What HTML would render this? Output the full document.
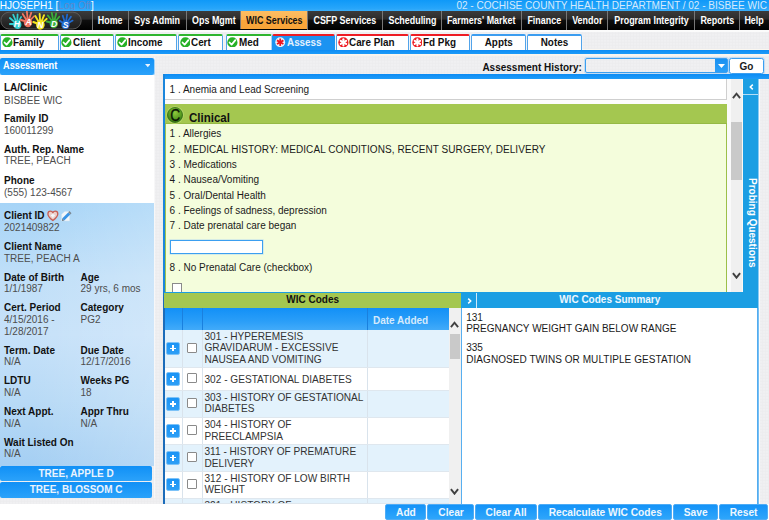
<!DOCTYPE html>
<html lang="en">
<head>
<meta charset="utf-8">
<title>HANDS - Assessment</title>
<style>
html,body{margin:0;padding:0;}
body{width:769px;height:520px;overflow:hidden;background:#fff;position:relative;
 font-family:"Liberation Sans",Arial,sans-serif;font-size:10px;color:#222;}
*{box-sizing:border-box;}
.a{position:absolute;}
.t{position:absolute;white-space:nowrap;line-height:12px;font-size:10px;margin-top:0.6px;}
.b{font-weight:bold;color:#111;}
.v{color:#4d4d4d;}
/* background */
#bg{left:0;top:30px;width:769px;height:473.7px;background-color:#ececee;
 background-image:radial-gradient(circle,#f6f6f8 0.6px,rgba(246,246,248,0) 1.1px);background-size:3px 3px;background-position:0.5px 0.4px;}
/* top bar */
#top{left:0;top:0;width:769px;height:11px;background:linear-gradient(#0f99f8,#26a5fa 75%,#3aaef9);overflow:hidden;}
#top .t{font-size:10.05px;color:#fff;line-height:12px;top:0;margin-top:0;}
/* nav */
#nav{left:0;top:11px;width:769px;height:19px;background:linear-gradient(#3b3b3b 0,#2c2c2c 42%,#0e0e0e 50%,#000 100%);}
#nav .i{position:absolute;top:0;height:19px;border-left:1px solid #777;color:#fff;font-weight:bold;font-size:10.2px;
 line-height:19px;text-align:center;white-space:nowrap;}
#nav .i span{display:inline-block;transform:scaleX(.875);}
#nav .sel{height:17.9px;background:linear-gradient(#fdbd62 0,#fbb352 48%,#f9a63c 52%,#f8a438 100%);color:#111;}
/* tab row */
#tabrow{left:0;top:30px;width:769px;height:20px;border-top:2px solid #fbfbfb;}
.tab{position:absolute;top:1.8px;height:16.2px;background:#fff;border:1px solid #52a4ea;box-shadow:0 0 0 0.6px #f4f6fa;border-bottom:0;border-top:2px solid #2fb52f;
 border-radius:2px 2px 0 0;font-weight:bold;font-size:10.4px;line-height:13px;color:#111;white-space:nowrap;}
.tab.red{border-top-color:#ee1c24;}
.tab.blue{border-top-color:#3c9df0;}
.tab.cur{height:16.4px;background:#1c93f1;color:#e4f1fd;border-color:#1c93f1;border-top-color:#ee1c24;}
.tab svg{position:absolute;left:0.6px;top:0.8px;}
.tab span{position:absolute;top:0.3px;transform:scaleX(.95);transform-origin:0 50%;}
#band{left:0;top:50px;width:769px;height:6px;background:linear-gradient(#0d8cf4 0,#1e9cf9 4.2px,#fbf6ee 4.3px,#f6f3ee 6px);}

/* left panel */
#lh{left:0;top:57.7px;width:153.8px;height:17px;border-radius:2px;background:linear-gradient(#1090f6,#2ba2fa);box-shadow:0.5px 0.5px 0 0.3px #8ccbfa;
 color:#fff;font-weight:bold;font-size:10px;line-height:16px;padding-left:3.3px;}
#lw{left:0;top:74.5px;width:153.8px;height:128.5px;background:#fff;}
#lb{left:0;top:203px;width:153.8px;height:262.5px;background:linear-gradient(90deg,rgba(255,255,255,0) 20%,rgba(255,255,255,.2)),linear-gradient(#a6d4f7 0,#c0dff8 28%,#c6e1f9 50%,#b8daf6 75%,#a5cff3 100%);}
.pbtn{position:absolute;left:0;width:152.2px;height:15.6px;border-radius:2px;background:linear-gradient(#1090f6,#2ba2fa);
 color:#eaf4fe;font-weight:bold;font-size:10px;line-height:15.5px;text-align:center;}

/* assessment history */
#ahl{left:482.4px;top:61px;font-weight:bold;font-size:10px;color:#111;}
#ahs{left:585px;top:58px;width:143px;height:15.2px;border:1px solid #3b9ff0;border-radius:2px;box-shadow:0 0 0 1px rgba(160,205,245,.55);}
#ahs i{position:absolute;right:0;top:0;width:12.5px;height:13.2px;background:linear-gradient(#1a91f1,#2a9ff7);}
#go{left:729.3px;top:58px;width:34.4px;height:16.4px;border:1px solid #3b9ff0;border-radius:2.5px;background:#fff;box-shadow:0 0 0 1px rgba(160,205,245,.55);
 font-weight:bold;font-size:10px;line-height:15px;text-align:center;color:#1a1a1a;}
/* main panel */
#mline{left:163.2px;top:74.3px;width:606px;height:4.6px;background:linear-gradient(#0d8cf4,#1e9cf9);}
#mleft{left:163.2px;top:74.3px;width:1.8px;height:429.4px;background:linear-gradient(#1b86dc 0,#1b86dc 50%,#1c6cba 52%);}
#q1{left:165px;top:78.9px;width:566px;height:25.1px;background:#fcfcfc;}
#q1 div{position:absolute;left:0;top:0;width:562.4px;height:21.6px;background:#fff;border-right:1px solid #cfcfcf;border-bottom:1px solid #cfcfcf;}
#gh{left:164px;top:104px;width:563px;height:20.4px;background:#a4c750;border-bottom:1.2px solid #95b945;}
#gb{left:164px;top:123.8px;width:563px;height:168px;background:#f4fddc;border-left:2.2px solid #a0c44e;border-right:1.2px solid #9cc04a;}
#sb1{left:727px;top:78.9px;width:16px;height:213px;background:linear-gradient(90deg,#fafafa 0,#fafafa 3.8px,#f0f0f0 4px,#f0f0f0 15px,#fbf9f5 15.1px);}
.thumb{position:absolute;background:#c9c9c9;}
#pq{left:743px;top:78.9px;width:15.2px;height:213.5px;background:#1b9ee3;}
#pqb{left:743px;top:78.9px;width:15.2px;height:16px;background:#1c9fe3;border-bottom:1.2px solid #b4ddf6;}
#pqt{left:752.4px;top:177.5px;width:0;height:0;}
#pqt span{position:absolute;left:0;top:0;transform-origin:0 0;transform:rotate(90deg) translate(0,-50%);white-space:nowrap;color:#fff;font-weight:bold;font-size:10px;line-height:12px;}
#rline{left:758.2px;top:78.9px;width:2px;height:424.8px;background:linear-gradient(90deg,#8ccaf3 0,#8ccaf3 0.9px,#fbfbfb 1px);}
.q{color:#1a1a1a;}

/* WIC codes */
#wl{left:164px;top:291.6px;width:594.2px;height:1.6px;background:#1b9ee3;}
#wh{left:164px;top:293px;width:297.3px;height:15px;background:#a4c750;text-align:center;font-weight:bold;font-size:10px;line-height:13px;color:#111;}
#sh{left:461.3px;top:292px;width:296.9px;height:16px;background:#1b9ee3;color:#eef7fe;font-weight:bold;font-size:10px;line-height:14px;}
#gHead{left:165px;top:308px;width:283.5px;height:21.5px;background:linear-gradient(#1290f7,#2a9ef8 60%,#42abf9);}
#gHead i{position:absolute;top:0;width:1px;height:21.5px;background:#1a80de;}
.row{position:absolute;left:165px;width:283.5px;border-bottom:1px solid #dfe7ee;overflow:hidden;}
.row.alt{background:#e3f2fc;}
.row.w{background:#fff;}
.row i{position:absolute;top:0;bottom:0;width:1px;background:#d9e3ec;}
.row .tx{position:absolute;left:39.5px;margin-top:0.6px;font-size:10.1px;line-height:11.75px;color:#333;white-space:nowrap;}
.plus{position:absolute;left:1px;width:13.6px;height:13.8px;border-radius:2px;background:linear-gradient(#1a93f5,#2e9ff6);border:1px solid #7cc2f8;}
.plus:before{content:"";position:absolute;left:2.8px;top:5.1px;width:6px;height:1.6px;background:#fff;}
.plus:after{content:"";position:absolute;left:5px;top:2.9px;width:1.6px;height:6px;background:#fff;}
.cb{position:absolute;left:22px;width:10px;height:10px;background:#fff;border:1px solid #8a8a8a;border-radius:1px;}
#sb2{left:448.5px;top:308px;width:12.6px;height:195.7px;background:#f0f0f0;}
#sv{left:461px;top:308px;width:1.4px;height:195.7px;background:#58aff0;}
#sum{left:462.4px;top:308px;width:294.7px;height:195.7px;background:#fff;}
#svr{left:757px;top:308px;width:2.1px;height:195.7px;background:linear-gradient(90deg,#3fa3ee,#8ac8f5);}
.btn{position:absolute;top:504.2px;height:15.6px;border-radius:2px;background:linear-gradient(#1493f8,#2ea6fb);border:1px solid #4eacf6;
 color:#eef7fe;font-weight:bold;font-size:10.2px;line-height:15.2px;text-align:center;white-space:nowrap;text-indent:0.6px;}
#bot{left:0;top:503.7px;width:769px;height:17px;background:#fff;}
#botl{left:0;top:497.7px;width:153.8px;height:6px;background:#fff;}
</style>
</head>
<body>
<div class="a" id="bg"></div>

<!-- TOP BAR -->
<div class="a" id="top">
 <div class="t" style="left:-0.3px">HJOSEPH1 [<span style="color:#5f89cc">Log Off</span>]</div>
 <div class="t" style="right:2px;color:#d6eafc" id="dept">02 - COCHISE COUNTY HEALTH DEPARTMENT / 02 - BISBEE WIC</div>
</div>

<!-- NAV -->
<div class="a" id="nav">
 <svg class="a" style="left:0;top:0" width="92" height="19" viewBox="0 0 92 19"><defs><linearGradient id="pg" x1="0" y1="0" x2="0" y2="1"><stop offset="0" stop-color="#414141"/><stop offset="0.5" stop-color="#2a2a2a"/><stop offset="1" stop-color="#1c1c1c"/></linearGradient><clipPath id="lc"><rect x="0" y="0" width="92" height="19"/></clipPath></defs><rect x="0.8" y="1.2" width="80.4" height="16.8" rx="8.4" fill="url(#pg)" stroke="#606060" stroke-width="0.9"/><g clip-path="url(#lc)"><g transform="translate(17.2 13.2) rotate(-14) scale(0.90)" stroke="#35cfd0" fill="#35cfd0" stroke-linecap="round"><ellipse cx="0" cy="0.4" rx="4.6" ry="5" stroke="none"/><path d="M-2.9 -0.8L-7.7 -2.1" stroke-width="2.3" fill="none"/><path d="M-1.8 -2.4L-6.2 -8.6" stroke-width="2.0" fill="none"/><path d="M-0.5 -3.0L-1.8 -11.3" stroke-width="2.0" fill="none"/><path d="M0.8 -2.9L3.0 -10.4" stroke-width="2.0" fill="none"/><path d="M2.0 -2.2L6.2 -6.8" stroke-width="1.9" fill="none"/></g><g transform="translate(28.0 11.2) rotate(3) scale(0.92)" stroke="#f07560" fill="#f07560" stroke-linecap="round"><ellipse cx="0" cy="0.4" rx="4.6" ry="5" stroke="none"/><path d="M-2.9 -0.8L-7.7 -2.1" stroke-width="2.3" fill="none"/><path d="M-1.8 -2.4L-6.2 -8.6" stroke-width="2.0" fill="none"/><path d="M-0.5 -3.0L-1.8 -11.3" stroke-width="2.0" fill="none"/><path d="M0.8 -2.9L3.0 -10.4" stroke-width="2.0" fill="none"/><path d="M2.0 -2.2L6.2 -6.8" stroke-width="1.9" fill="none"/></g><g transform="translate(40.4 13.6) rotate(5) scale(0.94)" stroke="#f4e41e" fill="#f4e41e" stroke-linecap="round"><ellipse cx="0" cy="0.4" rx="4.6" ry="5" stroke="none"/><path d="M-2.9 -0.8L-7.7 -2.1" stroke-width="2.3" fill="none"/><path d="M-1.8 -2.4L-6.2 -8.6" stroke-width="2.0" fill="none"/><path d="M-0.5 -3.0L-1.8 -11.3" stroke-width="2.0" fill="none"/><path d="M0.8 -2.9L3.0 -10.4" stroke-width="2.0" fill="none"/><path d="M2.0 -2.2L6.2 -6.8" stroke-width="1.9" fill="none"/></g><g transform="translate(53.8 12.2) rotate(-2) scale(0.92)" stroke="#3aae3a" fill="#3aae3a" stroke-linecap="round"><ellipse cx="0" cy="0.4" rx="4.6" ry="5" stroke="none"/><path d="M-2.9 -0.8L-7.7 -2.1" stroke-width="2.3" fill="none"/><path d="M-1.8 -2.4L-6.2 -8.6" stroke-width="2.0" fill="none"/><path d="M-0.5 -3.0L-1.8 -11.3" stroke-width="2.0" fill="none"/><path d="M0.8 -2.9L3.0 -10.4" stroke-width="2.0" fill="none"/><path d="M2.0 -2.2L6.2 -6.8" stroke-width="1.9" fill="none"/></g><g transform="translate(65.6 13.6) rotate(18) scale(0.88)" stroke="#1f6ad0" fill="#1f6ad0" stroke-linecap="round"><ellipse cx="0" cy="0.4" rx="4.6" ry="5" stroke="none"/><path d="M-2.9 -0.8L-7.7 -2.1" stroke-width="2.3" fill="none"/><path d="M-1.8 -2.4L-6.2 -8.6" stroke-width="2.0" fill="none"/><path d="M-0.5 -3.0L-1.8 -11.3" stroke-width="2.0" fill="none"/><path d="M0.8 -2.9L3.0 -10.4" stroke-width="2.0" fill="none"/><path d="M2.0 -2.2L6.2 -6.8" stroke-width="1.9" fill="none"/></g></g><g font-family="Liberation Sans, Arial, sans-serif" font-weight="bold" font-style="italic" font-size="9.6" fill="#fff" text-anchor="middle"><text transform="translate(16.9 16.4) scale(.9 1)">H</text><text transform="translate(28.6 14.0) scale(.9 1)">A</text><text transform="translate(40.4 16.6) scale(.9 1)">N</text><text transform="translate(54.2 16.1) scale(.9 1)">D</text><text transform="translate(65.6 17.2) scale(.9 1)">S</text></g></svg>
 <div class="i" style="left:92px;width:36px"><span>Home</span></div>
 <div class="i" style="left:128px;width:58px"><span>Sys Admin</span></div>
 <div class="i" style="left:186px;width:54px"><span>Ops Mgmt</span></div>
 <div class="i sel" style="left:240px;width:67px"><span>WIC Services</span></div>
 <div class="i" style="left:307px;width:75px"><span>CSFP Services</span></div>
 <div class="i" style="left:382px;width:59px"><span>Scheduling</span></div>
 <div class="i" style="left:441px;width:80px"><span>Farmers' Market</span></div>
 <div class="i" style="left:521px;width:45px"><span>Finance</span></div>
 <div class="i" style="left:566px;width:41px"><span>Vendor</span></div>
 <div class="i" style="left:607px;width:87px"><span>Program Integrity</span></div>
 <div class="i" style="left:694px;width:45px"><span>Reports</span></div>
 <div class="i" style="left:739px;width:30px"><span>Help</span></div>
</div>

<!-- TABS -->
<div class="a" style="left:0;top:49px;width:769px;height:1px;background:#fbf7f0"></div>
<div class="a" id="tabrow">
 <div class="tab " style="left:0.3px;width:58.6px"><svg width="10.8" height="10.8" viewBox="0 0 11 11"><circle cx="5.5" cy="5.5" r="5.2" fill="#27b127"/><path d="M2.6 5.6 L4.7 7.8 L8.5 3.2" fill="none" stroke="#fff" stroke-width="1.8" stroke-linecap="round" stroke-linejoin="round"/></svg><span style="left:12.1px">Family</span></div>
 <div class="tab " style="left:59.8px;width:54.3px"><svg width="10.8" height="10.8" viewBox="0 0 11 11"><circle cx="5.5" cy="5.5" r="5.2" fill="#27b127"/><path d="M2.6 5.6 L4.7 7.8 L8.5 3.2" fill="none" stroke="#fff" stroke-width="1.8" stroke-linecap="round" stroke-linejoin="round"/></svg><span style="left:12.1px">Client</span></div>
 <div class="tab " style="left:115.1px;width:61.7px"><svg width="10.8" height="10.8" viewBox="0 0 11 11"><circle cx="5.5" cy="5.5" r="5.2" fill="#27b127"/><path d="M2.6 5.6 L4.7 7.8 L8.5 3.2" fill="none" stroke="#fff" stroke-width="1.8" stroke-linecap="round" stroke-linejoin="round"/></svg><span style="left:12.1px">Income</span></div>
 <div class="tab " style="left:178.0px;width:45.4px"><svg width="10.8" height="10.8" viewBox="0 0 11 11"><circle cx="5.5" cy="5.5" r="5.2" fill="#27b127"/><path d="M2.6 5.6 L4.7 7.8 L8.5 3.2" fill="none" stroke="#fff" stroke-width="1.8" stroke-linecap="round" stroke-linejoin="round"/></svg><span style="left:12.1px">Cert</span></div>
 <div class="tab " style="left:225.5px;width:46.5px"><svg width="10.8" height="10.8" viewBox="0 0 11 11"><circle cx="5.5" cy="5.5" r="5.2" fill="#27b127"/><path d="M2.6 5.6 L4.7 7.8 L8.5 3.2" fill="none" stroke="#fff" stroke-width="1.8" stroke-linecap="round" stroke-linejoin="round"/></svg><span style="left:12.1px">Med</span></div>
 <div class="tab cur" style="left:272.4px;width:62.7px"><svg style="left:1.9px" width="10.4" height="10.4" viewBox="0 0 11 11"><circle cx="5.5" cy="5.5" r="5.2" fill="#e9f3fd"/><g stroke="#f0141e" stroke-width="1.9" stroke-linecap="butt"><path d="M5.5 1.6V9.4"/><path d="M2.1 3.55L8.9 7.45"/><path d="M8.9 3.55L2.1 7.45"/></g></svg><span style="left:13.3px">Assess</span></div>
 <div class="tab red" style="left:335.5px;width:73.9px"><svg style="left:1.6px" width="10.8" height="10.8" viewBox="0 0 11 11"><circle cx="5.5" cy="5.5" r="5.2" fill="#ee1c24"/><g stroke="#fff" stroke-width="2.1" stroke-linecap="round"><path d="M5.5 2.3V8.7"/><path d="M2.75 3.9L8.25 7.1"/><path d="M8.25 3.9L2.75 7.1"/></g></svg><span style="left:12.8px">Care Plan</span></div>
 <div class="tab red" style="left:410.1px;width:59.5px"><svg width="10.8" height="10.8" viewBox="0 0 11 11"><circle cx="5.5" cy="5.5" r="5.2" fill="#ee1c24"/><g stroke="#fff" stroke-width="2.1" stroke-linecap="round"><path d="M5.5 2.3V8.7"/><path d="M2.75 3.9L8.25 7.1"/><path d="M8.25 3.9L2.75 7.1"/></g></svg><span style="left:12.1px">Fd Pkg</span></div>
 <div class="tab blue" style="left:470.7px;width:55.3px;text-align:center"><span style="position:static;display:inline-block;transform-origin:50% 50%">Appts</span></div>
 <div class="tab blue" style="left:526.9px;width:55.0px;text-align:center"><span style="position:static;display:inline-block;transform-origin:50% 50%">Notes</span></div>
</div>
<div class="a" id="band"></div>

<!-- LEFT PANEL -->
<div class="a" style="left:153.8px;top:57px;width:1.2px;height:441px;background:#f7f7f8"></div>
<div class="a" id="lh"><span style="display:inline-block;transform:scaleX(.92);transform-origin:0 50%">Assessment</span><svg class="a" style="left:144.6px;top:6.8px" width="5.6" height="3.2" viewBox="0 0 7 4"><path d="M0 0H7L3.5 4Z" fill="#e8f3fe"/></svg></div>
<div class="a" id="lw"></div>
<div class="a" id="lb"></div>
<div class="t b" style="left:4.0px;top:81.5px">LA/Clinic</div>
<div class="t v" style="left:4.0px;top:94.0px">BISBEE WIC</div>
<div class="t b" style="left:4.0px;top:112.0px">Family ID</div>
<div class="t v" style="left:4.0px;top:124.0px">160011299</div>
<div class="t b" style="left:4.0px;top:143.5px">Auth. Rep. Name</div>
<div class="t v" style="left:4.0px;top:154.7px">TREE, PEACH</div>
<div class="t b" style="left:4.0px;top:174.0px">Phone</div>
<div class="t v" style="left:4.0px;top:186.0px">(555) 123-4567</div>
<div class="t b" style="left:4.0px;top:209.8px">Client ID<svg class="a" style="left:43px;top:-0.5px" width="26" height="12" viewBox="0 0 26 12"><path d="M5.85 10.5C2.3 7.7 0.9 6 0.9 3.9C0.9 2.2 2.1 1.1 3.5 1.1C4.5 1.1 5.35 1.6 5.85 2.6C6.35 1.6 7.2 1.1 8.2 1.1C9.6 1.1 10.8 2.2 10.8 3.9C10.8 6 9.4 7.7 5.85 10.5Z" fill="#eccfca" stroke="#c65f55" stroke-width="1.3"/><path d="M5.85 3.6V7.6M3.9 5.6H7.8" stroke="#f4f8fc" stroke-width="1.5" fill="none"/><path d="M14.6 4.2L17.8 1.6H22.6V10.9H14.6Z" fill="#f3f7fb" stroke="#d5e2ee" stroke-width="0.5"/><path d="M16.2 9.6L22.2 3.4" stroke="#3a94e6" stroke-width="2.9" stroke-linecap="butt"/><path d="M22.2 3.4L23.5 2.1" stroke="#7a8894" stroke-width="2.9"/><path d="M15 10.9L15.3 8.6L17.2 10.5Z" fill="#5f6e7a"/></svg></div>
<div class="t v" style="left:4.0px;top:221.5px">2021409822</div>
<div class="t b" style="left:4.0px;top:240.0px">Client Name</div>
<div class="t v" style="left:4.0px;top:252.0px">TREE, PEACH A</div>
<div class="t b" style="left:4.0px;top:271.0px">Date of Birth</div>
<div class="t v" style="left:4.0px;top:282.8px">1/1/1987</div>
<div class="t b" style="left:80.5px;top:271.0px">Age</div>
<div class="t v" style="left:80.5px;top:282.8px">29 yrs, 6 mos</div>
<div class="t b" style="left:4.0px;top:301.6px">Cert. Period</div>
<div class="t v" style="left:4.0px;top:313.2px">4/15/2016 -</div>
<div class="t v" style="left:4.0px;top:325.2px">1/28/2017</div>
<div class="t b" style="left:80.5px;top:301.6px">Category</div>
<div class="t v" style="left:80.5px;top:313.2px">PG2</div>
<div class="t b" style="left:4.0px;top:344.4px">Term. Date</div>
<div class="t v" style="left:4.0px;top:355.7px">N/A</div>
<div class="t b" style="left:80.5px;top:344.4px">Due Date</div>
<div class="t v" style="left:80.5px;top:355.7px">12/17/2016</div>
<div class="t b" style="left:4.0px;top:374.8px">LDTU</div>
<div class="t v" style="left:4.0px;top:386.4px">N/A</div>
<div class="t b" style="left:80.5px;top:374.8px">Weeks PG</div>
<div class="t v" style="left:80.5px;top:386.4px">18</div>
<div class="t b" style="left:4.0px;top:405.6px">Next Appt.</div>
<div class="t v" style="left:4.0px;top:417.0px">N/A</div>
<div class="t b" style="left:80.5px;top:405.6px">Appr Thru</div>
<div class="t v" style="left:80.5px;top:417.0px">N/A</div>
<div class="t b" style="left:4.0px;top:436.0px">Wait Listed On</div>
<div class="t v" style="left:4.0px;top:447.5px">N/A</div>
<div class="pbtn" style="top:465.8px">TREE, APPLE D</div>
<div class="pbtn" style="top:481.9px;height:15.8px">TREE, BLOSSOM C</div>
<!-- MAIN PANEL -->
<div class="t" id="ahl">Assessment History:</div>
<div class="a" id="ahs"><i><svg class="a" style="left:3px;top:5px" width="7" height="4" viewBox="0 0 7 4"><path d="M0 0H7L3.5 4Z" fill="#fff"/></svg></i></div>
<div class="a" id="go">Go</div>
<div class="a" id="mline"></div>
<div class="a" id="q1"><div></div></div>
<div class="a" id="gh"></div><div class="a" id="gb"></div>
<div class="a" id="mleft"></div>
<svg class="a" style="left:166.2px;top:105.9px" width="18" height="18" viewBox="0 0 18 18"><defs><radialGradient id="cg" cx="50%" cy="35%" r="65%"><stop offset="0" stop-color="#8fca3c"/><stop offset="0.6" stop-color="#5a9e22"/><stop offset="1" stop-color="#2f7212"/></radialGradient></defs><circle cx="9" cy="9" r="8.7" fill="#b9dc6c"/><circle cx="9" cy="9" r="7.6" fill="url(#cg)" stroke="#2c6410" stroke-width="0.7"/><text x="0" y="0" text-anchor="middle" transform="translate(9.2 14.6) scale(.86 1)" font-family="Liberation Sans, Arial, sans-serif" font-size="16" fill="#0a1605" stroke="#0a1605" stroke-width="0.35">C</text></svg>
<div class="t b" style="left:188.6px;top:110px;font-size:12.4px;line-height:14px;color:#111;transform:scaleX(.93);transform-origin:0 50%" id="clin">Clinical</div>
<div class="t q" style="left:169.6px;top:83.0px">1 . Anemia and Lead Screening</div>
<div class="t q" style="left:169.6px;top:127.8px">1 . Allergies</div>
<div class="t q" style="left:169.6px;top:143.5px;letter-spacing:0.067px">2 . MEDICAL HISTORY: MEDICAL CONDITIONS, RECENT SURGERY, DELIVERY</div>
<div class="t q" style="left:169.6px;top:158.5px">3 . Medications</div>
<div class="t q" style="left:169.6px;top:173.5px">4 . Nausea/Vomiting</div>
<div class="t q" style="left:169.6px;top:189.5px">5 . Oral/Dental Health</div>
<div class="t q" style="left:169.6px;top:204.5px">6 . Feelings of sadness, depression</div>
<div class="t q" style="left:169.6px;top:219.5px">7 . Date prenatal care began</div>
<div class="t q" style="left:169.6px;top:261.0px">8 . No Prenatal Care (checkbox)</div>
<div class="a" style="left:169.5px;top:240px;width:93.5px;height:13.8px;background:#fff;border:1px solid #3b9ff0;box-shadow:0 0 0 0.6px rgba(160,205,245,.6)"></div>
<div class="a" style="left:172px;top:283px;width:10px;height:9px;background:#fff;border:1px solid #8a8a8a;border-bottom:0"></div>
<div class="a" id="sb1"><div class="thumb" style="left:4.2px;top:43.2px;width:11.2px;height:58px"></div><svg class="a" style="left:5.4px;top:12.8px" width="9" height="7.4" viewBox="0 0 9 7.4"><path d="M0.9 6.2L4.5 1.7L8.1 6.2" fill="none" stroke="#404040" stroke-width="1.9"/></svg><svg class="a" style="left:5.4px;top:192.8px" width="9" height="7.4" viewBox="0 0 9 7.4"><path d="M0.9 1.2L4.5 5.7L8.1 1.2" fill="none" stroke="#404040" stroke-width="1.9"/></svg></div>
<div class="a" id="pq"></div><div class="a" id="pqb"><svg class="a" style="left:5.8px;top:5.2px" width="5" height="6" viewBox="0 0 5 6"><path d="M3.8 0.6L1.3 3L3.8 5.4" fill="none" stroke="#fff" stroke-width="1.5"/></svg></div>
<div class="a" id="pqt"><span>Probing Questions</span></div>
<div class="a" id="rline"></div>
<!-- WIC CODES GRID + SUMMARY -->
<div class="a" id="bot"></div>
<div class="a" id="wl"></div><div class="a" id="wh">WIC Codes</div>
<div class="a" id="sh"><svg class="a" style="left:6px;top:6.4px" width="5" height="6" viewBox="0 0 5 6"><path d="M1.2 0.6L3.7 3L1.2 5.4" fill="none" stroke="#fff" stroke-width="1.5"/></svg><div class="a" style="left:14.9px;top:1.4px;width:1.2px;height:14.6px;background:#cfe9fa"></div><div class="a" id="sht" style="left:0;right:0;top:0.5px;text-align:center">WIC Codes Summary</div></div>
<div class="a" id="gHead"><i style="left:16.8px"></i><i style="left:36.8px"></i><i style="left:201.8px"></i><div class="t b" style="left:208px;top:6px;color:#d5eafc">Date Added</div></div>
<div class="row alt" style="top:330.1px;height:38.1px"><i style="left:16.8px"></i><i style="left:36.8px"></i><i style="left:201.8px"></i><b class="plus" style="top:11.5px"></b><b class="cb" style="top:12.8px"></b><div class="tx" style="top:0.0px">301 - HYPEREMESIS</div><div class="tx" style="top:11.6px">GRAVIDARUM - EXCESSIVE</div><div class="tx" style="top:23.4px">NAUSEA AND VOMITING</div></div>
<div class="row w" style="top:368.2px;height:22.8px"><i style="left:16.8px"></i><i style="left:36.8px"></i><i style="left:201.8px"></i><b class="plus" style="top:3.8px"></b><b class="cb" style="top:5.1px"></b><div class="tx" style="top:4.9px">302 - GESTATIONAL DIABETES</div></div>
<div class="row alt" style="top:391.0px;height:27.0px"><i style="left:16.8px"></i><i style="left:36.8px"></i><i style="left:201.8px"></i><b class="plus" style="top:5.9px"></b><b class="cb" style="top:7.2px"></b><div class="tx" style="top:0.6px">303 - HISTORY OF GESTATIONAL</div><div class="tx" style="top:11.7px">DIABETES</div></div>
<div class="row w" style="top:418.0px;height:27.0px"><i style="left:16.8px"></i><i style="left:36.8px"></i><i style="left:201.8px"></i><b class="plus" style="top:5.9px"></b><b class="cb" style="top:7.2px"></b><div class="tx" style="top:0.6px">304 - HISTORY OF</div><div class="tx" style="top:12.3px">PREECLAMPSIA</div></div>
<div class="row alt" style="top:445.0px;height:26.8px"><i style="left:16.8px"></i><i style="left:36.8px"></i><i style="left:201.8px"></i><b class="plus" style="top:5.8px"></b><b class="cb" style="top:7.1px"></b><div class="tx" style="top:0.4px">311 - HISTORY OF PREMATURE</div><div class="tx" style="top:12.1px">DELIVERY</div></div>
<div class="row w" style="top:471.8px;height:26.8px"><i style="left:16.8px"></i><i style="left:36.8px"></i><i style="left:201.8px"></i><b class="plus" style="top:5.8px"></b><b class="cb" style="top:7.1px"></b><div class="tx" style="top:1.0px">312 - HISTORY OF LOW BIRTH</div><div class="tx" style="top:11.9px">WEIGHT</div></div>
<div class="row alt" style="top:498.6px;height:5.7px"><i style="left:16.8px"></i><i style="left:36.8px"></i><i style="left:201.8px"></i><div class="tx" style="top:0.5px">321 - HISTORY OF</div></div>
<div class="a" id="sb2"><div class="thumb" style="left:1.2px;top:25.8px;width:10.6px;height:25px"></div><svg class="a" style="left:1.9px;top:12.6px" width="9" height="7.4" viewBox="0 0 9 7.4"><path d="M0.9 6.2L4.5 1.7L8.1 6.2" fill="none" stroke="#404040" stroke-width="1.9"/></svg><svg class="a" style="left:1.9px;top:179.6px" width="9" height="7.4" viewBox="0 0 9 7.4"><path d="M0.9 1.2L4.5 5.7L8.1 1.2" fill="none" stroke="#404040" stroke-width="1.9"/></svg></div>
<div class="a" id="sv"></div><div class="a" id="sum"></div><div class="a" id="svr"></div>
<div class="t q" style="left:466.2px;top:311.5px">131</div>
<div class="t q" style="left:466.2px;top:322.8px">PREGNANCY WEIGHT GAIN BELOW RANGE</div>
<div class="t q" style="left:466.2px;top:341.5px">335</div>
<div class="t q" style="left:466.2px;top:353.2px;letter-spacing:0.06px">DIAGNOSED TWINS OR MULTIPLE GESTATION</div>
<!-- BUTTONS -->
<div class="btn" style="left:384.8px;width:41.7px">Add</div>
<div class="btn" style="left:427.2px;width:47.1px">Clear</div>
<div class="btn" style="left:474.8px;width:62.0px">Clear All</div>
<div class="btn" style="left:538.3px;width:133.3px">Recalculate WIC Codes</div>
<div class="btn" style="left:673.0px;width:44.8px">Save</div>
<div class="btn" style="left:718.8px;width:49.0px">Reset</div>
</body>
</html>
